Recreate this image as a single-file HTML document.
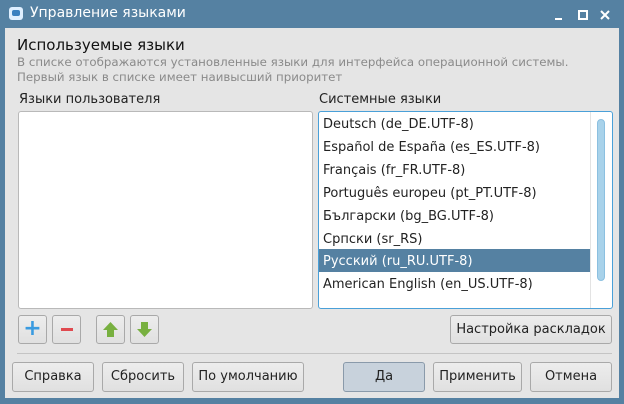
<!DOCTYPE html>
<html><head><meta charset="utf-8"><style>
*{box-sizing:border-box;margin:0;padding:0}
body{width:624px;height:404px;background:#5581a2;font-family:"DejaVu Sans","Liberation Sans",sans-serif;font-size:13px;color:#222;position:relative;overflow:hidden}
.abs{position:absolute}
.title{left:30px;top:5px;color:#fff;font-size:14px}
.main{left:5px;top:28px;width:614px;height:370px;background:#e5e5e5}
.list{background:#fff;border:1px solid #b9b9b9;border-radius:3px}
.btn{position:absolute;border:1px solid #a9a9a9;border-radius:3px;background:linear-gradient(#ededed,#e0e0e0);text-align:center;font-size:13px;color:#222}
.item{position:absolute;left:4px;font-size:13px;white-space:nowrap}
</style></head><body>
<div class="abs" style="left:9px;top:7px;width:14px;height:13px;background:#dfefff;border-radius:3px"></div>
<div class="abs" style="left:12px;top:10px;width:8px;height:6px;background:#3a80c0;border-radius:2px"></div>
<div class="abs title">Управление языками</div>
<div class="abs" style="left:555px;top:18px;width:7px;height:2px;background:#fff"></div>
<div class="abs" style="left:578px;top:10px;width:10px;height:10px;border:2px solid #fff"></div>
<svg class="abs" style="left:600px;top:10px" width="10" height="10"><path d="M1 1L9 9M9 1L1 9" stroke="#fff" stroke-width="2"/></svg>
<div class="abs main"></div>
<div class="abs" style="left:17px;top:36px;font-size:15px;color:#111">Используемые языки</div>
<div class="abs" style="left:17px;top:55px;font-size:11.8px;color:#8a8a8a;line-height:15px">В списке отображаются установленные языки для интерфейса операционной системы.<br>Первый язык в списке имеет наивысший приоритет</div>
<div class="abs" style="left:19px;top:92px">Языки пользователя</div>
<div class="abs" style="left:319px;top:92px">Системные языки</div>
<div class="abs list" style="left:18px;top:111px;width:295px;height:198px"></div>
<div class="abs list" style="left:318px;top:111px;width:295px;height:198px;border-color:#4aa0d8;overflow:hidden">
 <div class="item" style="top:5px">Deutsch (de_DE.UTF-8)</div>
 <div class="item" style="top:28px">Español de España (es_ES.UTF-8)</div>
 <div class="item" style="top:51px">Français (fr_FR.UTF-8)</div>
 <div class="item" style="top:74px">Português europeu (pt_PT.UTF-8)</div>
 <div class="item" style="top:97px">Български (bg_BG.UTF-8)</div>
 <div class="item" style="top:120px">Српски (sr_RS)</div>
 <div class="abs" style="left:0;top:137px;width:271px;height:23px;background:#5581a2"></div>
 <div class="item" style="top:142px;color:#fff">Русский (ru_RU.UTF-8)</div>
 <div class="item" style="top:165px">American English (en_US.UTF-8)</div>
 <div class="abs" style="left:271px;top:0;width:1px;height:196px;background:#e3e3e3"></div>
 <div class="abs" style="left:278px;top:7px;width:8px;height:162px;background:#a8d2ea;border:1px solid #8cc0e0;border-radius:4px"></div>
</div>
<div class="btn" style="left:18px;top:315px;width:29px;height:29px;color:#3a9be0;font-size:22px;font-weight:bold;line-height:25px">+</div>
<div class="btn" style="left:52px;top:315px;width:29px;height:29px"><div class="abs" style="left:8px;top:12px;width:12px;height:3px;background:#e04a50"></div></div>
<div class="btn" style="left:96px;top:315px;width:29px;height:29px"><svg width="27" height="27" style="position:absolute;left:0;top:0"><path d="M13.5 6 L21 14 H17 V21 H10 V14 H6 Z" fill="#78b040"/></svg></div>
<div class="btn" style="left:130px;top:315px;width:29px;height:29px"><svg width="27" height="27" style="position:absolute;left:0;top:0"><path d="M13.5 21 L21 13 H17 V6 H10 V13 H6 Z" fill="#78b040"/></svg></div>
<div class="btn" style="left:450px;top:315px;width:162px;height:29px;line-height:27px">Настройка раскладок</div>
<div class="abs" style="left:17px;top:353px;width:595px;height:1px;background:#c4c4c4"></div>
<div class="btn" style="left:12px;top:362px;width:82px;height:30px;line-height:28px">Справка</div>
<div class="btn" style="left:102px;top:362px;width:82px;height:30px;line-height:28px">Сбросить</div>
<div class="btn" style="left:192px;top:362px;width:112px;height:30px;line-height:28px">По умолчанию</div>
<div class="btn" style="left:343px;top:362px;width:82px;height:30px;line-height:28px;background:#c8d2dc;border-color:#8a9aaa">Да</div>
<div class="btn" style="left:433px;top:362px;width:89px;height:30px;line-height:28px">Применить</div>
<div class="btn" style="left:530px;top:362px;width:82px;height:30px;line-height:28px">Отмена</div>
</body></html>
